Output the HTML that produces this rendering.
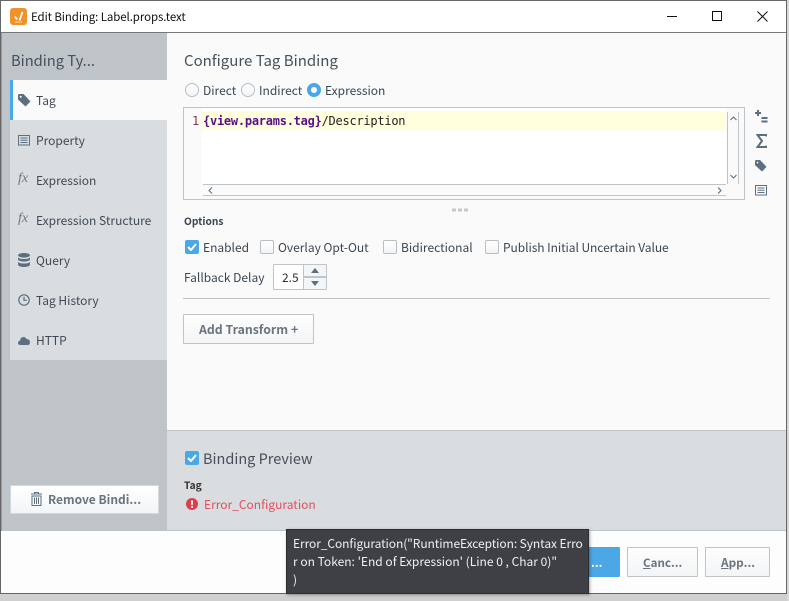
<!DOCTYPE html>
<html><head><meta charset="utf-8">
<style>
html,body{margin:0;padding:0}
body{width:789px;height:601px;overflow:hidden;position:relative;background:#c9c9c9;font-family:"Noto Sans CJK JP","Liberation Sans",sans-serif;font-size:12px;color:#3c4650}
div,span,svg{position:absolute;box-sizing:border-box}
.t{white-space:nowrap;line-height:18px;height:18px}
.nav{left:36px;color:#3f4a55}
.b{font-weight:700}
.cb{width:14px;height:14px;border:1px solid #b9bec3;border-radius:2px;background:linear-gradient(#fff,#f2f4f6)}
.cbon{width:14px;height:14px;border-radius:2px;background:#4aa8e6}
.rad{width:14px;height:14px;border-radius:50%;border:1px solid #b9bec3;background:linear-gradient(#fff,#f2f4f6)}
.btn{border:1px solid #bfc4c8;border-radius:1px;background:linear-gradient(#fdfdfd,#f3f5f7)}
</style></head><body>
<div style="left:0;top:594px;width:789px;height:7px;background:#cfcfcf"></div>
<div style="left:787px;top:0;width:2px;height:601px;background:#d8d8d8"></div>
<div style="left:0;top:0;width:787px;height:594px;background:#fff;border:1px solid #666"></div>
<div style="left:1px;top:32px;width:785px;height:1px;background:#777"></div>
<div style="left:1px;top:33px;width:1px;height:498px;background:#999"></div>

<!-- title -->
<svg style="left:10px;top:8px" width="17" height="17" viewBox="0 0 17 17"><rect width="17" height="17" rx="3" fill="#f0922b"/><path d="M5 8.500l2 3M12.500 4L9.500 12.500" stroke="#fff" stroke-width="1.800" fill="none"/><path d="M5 14h7" stroke="#fbd9a8" stroke-width="1"/></svg>
<div class="t" style="left:31px;top:8px;font-size:11.500px;letter-spacing:-.1px;color:#111">Edit Binding: Label.props.text</div>
<div style="left:667px;top:16px;width:10px;height:1px;background:#111"></div>
<div style="left:712px;top:11px;width:10px;height:10px;border:1px solid #111"></div>
<svg style="left:757px;top:11px" width="11" height="11" viewBox="0 0 11 11"><path d="M.5.500l10 10M10.500.500l-10 10" stroke="#111" stroke-width="1" fill="none"/></svg>

<!-- sidebar -->
<div style="left:2px;top:33px;width:165px;height:498px;background:#bfc4c8"></div>
<div class="t" style="left:11px;top:51px;font-size:14.700px;height:20px;line-height:20px;color:#47505a">Binding Ty...</div>
<div style="left:10px;top:120px;width:157px;height:240px;background:#d9dde0"></div>
<div style="left:10px;top:80px;width:157px;height:40px;background:#fafafa"></div>
<div style="left:10px;top:80px;width:3px;height:40px;background:#4aa8e6"></div>

<svg style="left:18px;top:94px" width="13" height="13" viewBox="0 0 13 13"><path d="M0 1.500Q0 0 1.500 0H5.500L12.500 7.500 7.500 12.500 0 5.500Z" fill="#5c6f80"/><circle cx="2.700" cy="2.700" r="1" fill="#fafafa"/></svg>
<div class="t nav" style="top:92px">Tag</div>

<svg style="left:18px;top:135px" width="12" height="11" viewBox="0 0 12 11"><rect x=".5" y=".5" width="11" height="9.500" fill="none" stroke="#5c6f80"/><path d="M2.500 3h7M2.500 5.200h7M2.500 7.500h7" stroke="#5c6f80"/></svg>
<div class="t nav" style="top:132px">Property</div>

<div class="t" style="left:18px;top:170px;font-family:'Liberation Serif',serif;font-style:italic;font-size:14px;color:#6a7784">fx</div>
<div class="t nav" style="top:172px">Expression</div>

<div class="t" style="left:18px;top:210px;font-family:'Liberation Serif',serif;font-style:italic;font-size:14px;color:#6a7784">fx</div>
<div class="t nav" style="top:212px">Expression Structure</div>

<svg style="left:18px;top:253px" width="12" height="14" viewBox="0 0 12 14"><ellipse cx="6" cy="2.300" rx="6" ry="2.300" fill="#5c6f80"/><path d="M0 4v2.200C0 7.500 2.500 8.500 6 8.500s6-1 6-2.300V4C12 5.300 9.500 6 6 6S0 5.300 0 4Z" fill="#5c6f80"/><path d="M0 8.500v3C0 12.900 2.500 14 6 14s6-1.100 6-2.500v-3C12 9.800 9.500 10.500 6 10.500S0 9.800 0 8.500Z" fill="#5c6f80"/></svg>
<div class="t nav" style="top:252px">Query</div>

<svg style="left:18px;top:294px" width="12" height="12" viewBox="0 0 12 12"><circle cx="6" cy="6" r="5.200" fill="none" stroke="#5c6f80" stroke-width="1.200"/><path d="M6 2.800V6.300H8.800" fill="none" stroke="#5c6f80" stroke-width="1.200"/></svg>
<div class="t nav" style="top:292px">Tag History</div>

<svg style="left:18px;top:336px" width="12" height="9" viewBox="0 0 12 9"><path d="M2.500 9Q0 9 0 6.800 0 5 2 4.600 2.500 1 5.500 1 7.500 1 8.500 3 12 3.200 12 6.200 12 9 9.500 9Z" fill="#5c6f80"/></svg>
<div class="t nav" style="top:332px">HTTP</div>

<div class="btn" style="left:10px;top:485px;width:149px;height:29px;border-color:#d5d8db;background:linear-gradient(#fff,#f2f5f8)"></div>
<svg style="left:31px;top:492px" width="11" height="14" viewBox="0 0 11 14"><path d="M3.500 1.500V.5h4v1M0 2h11M1 4h9v9.500H1ZM3.500 5.500v6.500M5.500 5.500v6.500M7.500 5.500v6.500" fill="none" stroke="#5c6f80"/></svg>
<div class="t b" style="left:48px;top:491px;color:#6a7480;font-size:12px">Remove Bindi...</div>

<!-- main -->
<div style="left:167px;top:33px;width:619px;height:398px;background:#fafafa"></div>
<div class="t" style="left:184px;top:51px;font-size:15px;height:20px;line-height:20px;color:#47505a">Configure Tag Binding</div>

<div class="rad" style="left:185px;top:83px"></div>
<div class="t" style="left:203px;top:82px">Direct</div>
<div class="rad" style="left:241px;top:83px"></div>
<div class="t" style="left:259px;top:82px">Indirect</div>
<div style="left:307px;top:83px;width:14px;height:14px;border-radius:50%;background:#fff;border:4px solid #4aa8e6"></div>
<div class="t" style="left:325px;top:82px">Expression</div>

<!-- editor -->
<div style="left:183px;top:107px;width:562px;height:93px;border:1px solid #bfc4c8;background:#fafafa"></div>
<div style="left:202px;top:108px;width:524px;height:76px;background:#fff"></div>
<div style="left:202px;top:111px;width:524px;height:18px;background:#ffffdc"></div>
<div class="t" style="left:192px;top:112px;font-family:'DejaVu Sans Mono',monospace;font-size:12px;color:#8a3a3a">1</div>
<div class="t" style="left:203px;top:112px;font-family:'DejaVu Sans Mono',monospace;font-size:12px;letter-spacing:-.25px;color:#222"><b style="color:#5a0f8c">{view.params.tag}</b>/Description</div>
<div style="left:203px;top:184px;width:523px;height:1px;background:#bfc4c8"></div>
<div style="left:203px;top:195px;width:523px;height:1px;background:#bfc4c8"></div>
<div style="left:727px;top:112px;width:1px;height:72px;background:#bfc4c8"></div>
<div style="left:738px;top:112px;width:1px;height:72px;background:#bfc4c8"></div>
<svg style="left:730px;top:116px" width="7" height="5" viewBox="0 0 7 5"><path d="M.5 4L3.500 1 6.500 4" fill="none" stroke="#5c6f80" stroke-width="1.100"/></svg>
<svg style="left:730px;top:174px" width="7" height="5" viewBox="0 0 7 5"><path d="M.5 1L3.500 4 6.500 1" fill="none" stroke="#5c6f80" stroke-width="1.100"/></svg>
<svg style="left:208px;top:187px" width="5" height="7" viewBox="0 0 5 7"><path d="M4 .5L1 3.500 4 6.500" fill="none" stroke="#5c6f80" stroke-width="1.100"/></svg>
<svg style="left:717px;top:187px" width="5" height="7" viewBox="0 0 5 7"><path d="M1 .5L4 3.500 1 6.500" fill="none" stroke="#5c6f80" stroke-width="1.100"/></svg>

<!-- right icons -->
<svg style="left:755px;top:110px" width="13" height="13" viewBox="0 0 13 13"><path d="M3 0v6M0 3h6" stroke="#5c6f80" stroke-width="2"/><path d="M6.500 7h6v2h-6ZM6.500 10.500h6v2h-6Z" fill="#5c6f80"/></svg>
<svg style="left:756px;top:134px" width="11" height="14" viewBox="0 0 11 14"><path d="M10.500 2.500V1H1.500L6 7 1.500 13H10.500V11.500" fill="none" stroke="#5c6f80" stroke-width="2"/></svg>
<svg style="left:755px;top:160px" width="12" height="12" viewBox="0 0 13 13"><path d="M0 1.500Q0 0 1.500 0H5.500L12.500 7.500 7.500 12.500 0 5.500Z" fill="#5c6f80"/><circle cx="2.700" cy="2.700" r="1" fill="#fafafa"/></svg>
<svg style="left:755px;top:185px" width="12" height="11" viewBox="0 0 12 11"><rect x=".5" y=".5" width="11" height="9.500" fill="none" stroke="#5c6f80"/><path d="M2.500 3h7M2.500 5.200h7M2.500 7.500h7" stroke="#5c6f80"/></svg>

<svg style="left:452px;top:208px" width="16" height="4" viewBox="0 0 16 4"><path d="M0 .5h4v3H0zM6 .5h4v3H6zM12 .5h4v3h-4z" fill="#c4c8cc"/></svg>

<!-- options -->
<div class="t b" style="left:184px;top:212px;font-size:10.200px;color:#3c4650">Options</div>

<div class="cbon" style="left:185px;top:240px"></div>
<svg style="left:187px;top:243px" width="10" height="8" viewBox="0 0 10 8"><path d="M1 4l3 3 5-6" fill="none" stroke="#fff" stroke-width="2"/></svg>
<div class="t" style="left:203px;top:239px">Enabled</div>
<div class="cb" style="left:260px;top:240px"></div>
<div class="t" style="left:278px;top:239px">Overlay Opt-Out</div>
<div class="cb" style="left:383px;top:240px"></div>
<div class="t" style="left:401px;top:239px">Bidirectional</div>
<div class="cb" style="left:485px;top:240px"></div>
<div class="t" style="left:503px;top:239px;letter-spacing:-.06px">Publish Initial Uncertain Value</div>

<div class="t" style="left:184px;top:269px">Fallback Delay</div>
<div style="left:273px;top:264px;width:54px;height:26px;border:1px solid #bfc4c8;background:#fff;border-radius:1px"></div>
<div class="t" style="left:282px;top:269px;color:#333">2.5</div>
<div style="left:303px;top:265px;width:23px;height:24px;background:#f3f5f7;border-left:1px solid #bfc4c8"></div>
<div style="left:304px;top:276px;width:22px;height:2px;background:#bfc4c8"></div>
<svg style="left:311px;top:268px" width="8" height="20" viewBox="0 0 8 20"><path d="M4 0L8 5H0Z M0 13H8L4 18Z" fill="#5c6f80"/></svg>

<div style="left:183px;top:298px;width:587px;height:1px;background:#bfc4c8"></div>
<div class="btn" style="left:183px;top:314px;width:131px;height:30px"></div>
<div class="t b" style="left:199px;top:320px;color:#6a7480;font-size:12.300px">Add Transform +</div>

<!-- preview -->
<div style="left:167px;top:430px;width:619px;height:101px;background:#d9dde0;border-top:1px solid #bfc4c8;border-bottom:1px solid #bfc4c8"></div>
<div class="cbon" style="left:185px;top:451px"></div>
<svg style="left:187px;top:454px" width="10" height="8" viewBox="0 0 10 8"><path d="M1 4l3 3 5-6" fill="none" stroke="#fff" stroke-width="2"/></svg>
<div class="t" style="left:203px;top:449px;font-size:14.500px;height:20px;line-height:20px;color:#47505a">Binding Preview</div>
<div class="t b" style="left:184px;top:476px;font-size:10.200px;color:#333">Tag</div>
<svg style="left:186px;top:498px" width="12" height="12" viewBox="0 0 12 12"><circle cx="6" cy="6" r="6" fill="#d9404f"/><path d="M5 2.500h2L6.700 7H5.300ZM5 8h2v1.700H5Z" fill="#fff"/></svg>
<div class="t" style="left:204px;top:496px;color:#e04f5c">Error_Configuration</div>

<!-- footer -->
<div style="left:1px;top:531px;width:785px;height:62px;background:#fdfdfd"></div>
<div style="left:570px;top:547px;width:50px;height:30px;background:#4aa8e6;border-radius:1px"></div>
<div class="t b" style="left:591px;top:554px;color:#fff;font-size:11.800px">...</div>
<div class="btn" style="left:627px;top:547px;width:71px;height:30px"></div>
<div class="t b" style="left:643px;top:554px;color:#6a7480;font-size:11.600px"><u>C</u>anc...</div>
<div class="btn" style="left:705px;top:547px;width:65px;height:30px"></div>
<div class="t b" style="left:721px;top:554px;color:#6a7480;font-size:11.800px"><u>A</u>pp...</div>

<!-- tooltip -->
<div style="left:286px;top:529px;width:303px;height:65px;background:#3f4045;border:1px solid #2c2d30;box-shadow:1px 1px 3px rgba(0,0,0,.35)"></div>
<div class="t" style="left:293px;top:535px;color:#f0f0f0;font-size:12px;letter-spacing:-.08px">Error_Configuration("RuntimeException: Syntax Erro</div>
<div class="t" style="left:293px;top:553px;color:#f0f0f0;font-size:12px">r on Token: 'End of Expression' (Line 0 , Char 0)"</div>
<div class="t" style="left:293px;top:571px;color:#f0f0f0;font-size:12px">)</div>
</body></html>
